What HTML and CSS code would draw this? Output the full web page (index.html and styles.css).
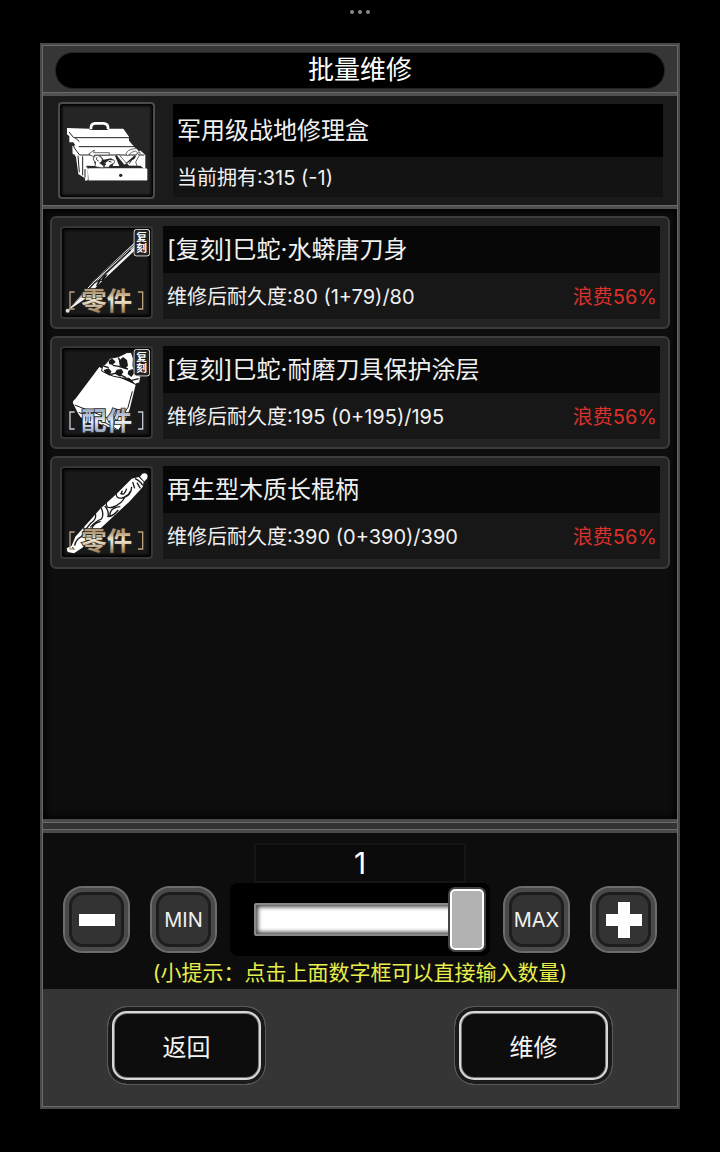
FILE: index.html
```html
<!DOCTYPE html>
<html lang="zh-CN">

<head>
    <meta charset="UTF-8">
    <meta name="viewport" content="width=device-width, initial-scale=1.0">
    <title>批量维修</title>
    <link rel="stylesheet" href="styles.css">
</head>

<body>
    <!-- 公用的渐变和角标 -->
    <svg class="defs" aria-hidden="true">
        <defs>
            <linearGradient id="gold" x1="0" y1="0" x2="0" y2="1">
                <stop offset="0.25" stop-color="#b39a74" />
                <stop offset="0.5" stop-color="#f6ead2" />
                <stop offset="0.9" stop-color="#9a7c52" />
            </linearGradient>
            <linearGradient id="silver" x1="0" y1="0" x2="0" y2="1">
                <stop offset="0.25" stop-color="#a5b2c9" />
                <stop offset="0.55" stop-color="#e9eef6" />
                <stop offset="0.9" stop-color="#8fa0ba" />
            </linearGradient>
            <symbol id="reissue" viewBox="0 0 51 84">
                <rect x="2" y="2" width="47" height="80" rx="8" fill="#222" stroke="#e6e6e6" stroke-width="3" />
                <text class="badge-text" x="25" y="38">复</text>
                <text class="badge-text" x="25" y="71">刻</text>
            </symbol>
        </defs>
    </svg>

    <header class="status">
        <span class="dot"></span>
        <span class="dot"></span>
        <span class="dot"></span>
    </header>

    <main class="panel">
        <div class="title-bar">
            <h1 class="title">批量维修</h1>
        </div>

        <!-- 当前使用的修理盒 -->
        <section class="tool">
            <div class="tool-icon">
                <svg viewBox="30 27 279 279" aria-hidden="true">
                    <path d="M123 103v-8q2-9 12-10h26q11 1 13 10v8" fill="none" stroke="#fff" stroke-width="8" />
                    <path d="M51 99l66 2 4 4h52l3-4h44l17 24v12l19 22-1 9 17-1 14 13v40l6 2v34H112l-7 1v-7l-20-13-7-50-5-9h-5l-1-25 9-2-6-9H58v-18l-7-6z" fill="#fff" />
                    <path d="M57 111l14 17h166M75 128l13 12M86 155h168M68 144l5 15 16 21h194M84 182l4 50M98 184v57M109 215l6 6v35M105 222v26" fill="none" stroke="#222" stroke-width="3" />
                    <path d="M108 212l28 1-7-25q8-10 23-5l9 11 22-4 10 7-5 16h20l-13-30 7-4 26 25 26-23 6 7-16 24h27l10 8H116z" fill="#242424" />
                    <path d="M116 177l17-12-2 8h47v7h-45l-1 6zM228 177q5-14 22-15 8-4 12 0l9 13-8-2-7-5-11 4-12 10z" fill="#fff" stroke="#222" stroke-width="2" />
                    <path d="M130 190q2-9 12-9 11 2 15 12-1 10-8 11l14 10-3 5-25-4 2-14q-7-3-7-11zM166 203l11-9 15 1 2 8-13 7-5 7-16-1 8-9-8-3zM199 181l8-2 30 34h24l-4-12 11-20-7-6-8 16-12 6-18 13z" fill="#fff" stroke="#222" stroke-width="2" />
                    <path d="M141 187q-4 9 5 11M176 199l8 2M238 206l8-13" fill="none" stroke="#222" stroke-width="3" />
                    <path d="M113 221h178v35H116z" fill="#fff" />
                    <path d="M115 220h176" stroke="#aaa" stroke-width="1" />
                    <circle cx="212" cy="241" r="5" fill="#222" />
                </svg>
            </div>
            <div class="info tool-info">
                <h2 class="name">军用级战地修理盒</h2>
                <p class="detail">当前拥有:315 (-1)</p>
            </div>
        </section>

        <ul class="list">
            <li class="item">
                <div class="item-icon">
                    <svg viewBox="36 39 267 267" aria-hidden="true">
                        <path d="M52 288L129 199 253 83l5 20-110 103-43 46z" fill="#f2f2f2" />
                        <path d="M60 272l74-77L254 88" fill="none" stroke="#1b1b1b" stroke-width="3" />
                        <path d="M66 272l75-77L255 93" fill="none" stroke="#1b1b1b" stroke-width="2" />
                        <path d="M104 236l30-33 14-8 24-24 70-66" fill="none" stroke="#1b1b1b" stroke-width="4" />
                        <path d="M138 212l10-20 6 3 8-14 11-3-14 21-7-2-9 16z" fill="#151515" />
                        <circle cx="53" cy="287" r="6" fill="#ddd" />
                        <use href="#reissue" x="250" y="41" width="51" height="84" />
                        <path class="bracket-gold" d="M74 231H60v51h14M264 231h14v51h-14" />
                        <text class="tag tag-gold" x="170" y="284">零件</text>
                    </svg>
                </div>
                <div class="info">
                    <h2 class="name">[复刻]巳蛇·水蟒唐刀身</h2>
                    <p class="detail">
                        <span>维修后耐久度:80 (1+79)/80</span>
                        <span class="waste">浪费56%</span>
                    </p>
                </div>
            </li>
            <li class="item">
                <div class="item-icon">
                    <svg viewBox="36 39 267 267" aria-hidden="true">
                        <path d="M148 96l49 26 60 27-18 74-10 25-25 38-112-39-8-12-15-30q-2-8 7-13z" fill="#fff" />
                        <path d="M74 210l100 39 55-7M86 232l83 33 35 20M247 169l-13 48-12 18" fill="none" stroke="#1b1b1b" stroke-width="3" />
                        <path d="M158 92l9-5 13-17 26-5 24-12 14-1 6 18-1 23 8 26 15 5-3 19-14 5-17-18-20-1-27-5-24-10-12-6z" fill="#fff" stroke="#1b1b1b" stroke-width="3" />
                        <path d="M176 78l10-8 11 10-9 10-11-3zM207 77l12-11 12 9 3 17-9 9-16-8zM194 116l6-12 14-2 6 9-9 14zM161 105l15-5 8 9-5 13-14-9zM235 107l13-5 8 8-12 16-11-9z" fill="#1b1b1b" />
                        <path d="M205 68l6 12 20-2M188 91l18 3 28 8M179 119l21-5 28 14M242 137l24-6M160 93l16 5" fill="none" stroke="#1b1b1b" stroke-width="4" />
                        <use href="#reissue" x="250" y="41" width="51" height="84" />
                        <path class="bracket-silver" d="M74 231H60v51h14M264 231h14v51h-14" />
                        <text class="tag tag-silver" x="170" y="284">配件</text>
                    </svg>
                </div>
                <div class="info">
                    <h2 class="name">[复刻]巳蛇·耐磨刀具保护涂层</h2>
                    <p class="detail">
                        <span>维修后耐久度:195 (0+195)/195</span>
                        <span class="waste">浪费56%</span>
                    </p>
                </div>
            </li>
            <li class="item">
                <div class="item-icon">
                    <svg viewBox="36 39 267 267" aria-hidden="true">
                        <path d="M245 71l22-5 14 14-3 16-40 44-94 87-47 51-25 17-19-4-3-11 15-8 11-27 75-84 49-45z" fill="#fff" />
                        <path d="M270 65l7-9q8-4 14 2 5 7 0 13l-9 9z" fill="#fff" />
                        <path d="M255 71q16 7 23 20M199 115q-2 17 17 14 29-7 29-34M211 115q12 9 19-14M218 107q-6 5-1 9M169 141q-3 22 20 15 27-10 36-31 12-5 17-18M154 159q9 21 0 33-19 8-33 25M164 153q14 14 10 32 14 0 31-20M180 185q-4-27 31-30M136 177q5 14-14 28l-22 27M125 223q4-18 27-24M98 215q12 10-4 30-17 9-20 27M261 83l10 17M248 81l6 19M67 277l5 7" fill="none" stroke="#1b1b1b" stroke-width="4" />
                        <path d="M267 65l15 15" stroke="#1b1b1b" stroke-width="3" />
                        <path class="bracket-gold" d="M74 231H60v51h14M264 231h14v51h-14" />
                        <text class="tag tag-gold" x="170" y="284">零件</text>
                    </svg>
                </div>
                <div class="info">
                    <h2 class="name">再生型木质长棍柄</h2>
                    <p class="detail">
                        <span>维修后耐久度:390 (0+390)/390</span>
                        <span class="waste">浪费56%</span>
                    </p>
                </div>
            </li>
        </ul>

        <div class="divider"></div>

        <!-- 数量选择 -->
        <section class="amount">
            <input class="number" type="text" inputmode="numeric" value="1" aria-label="数量">
            <div class="controls">
                <div class="btn-group">
                    <button class="btn-square" type="button" aria-label="减少">
                        <svg width="36" height="36" viewBox="0 0 36 36" aria-hidden="true"><path d="M0 12h36v12H0z" fill="#fff" /></svg>
                    </button>
                    <button class="btn-square" type="button">MIN</button>
                </div>
                <div class="slider-box">
                    <input class="slider" type="range" min="0" max="1" value="1" aria-label="数量滑块">
                </div>
                <div class="btn-group">
                    <button class="btn-square" type="button">MAX</button>
                    <button class="btn-square" type="button" aria-label="增加">
                        <svg width="36" height="36" viewBox="0 0 36 36" aria-hidden="true"><path d="M12 0h12v12h12v12H24v12H12V24H0V12h12z" fill="#fff" /></svg>
                    </button>
                </div>
            </div>
            <p class="hint">(小提示：点击上面数字框可以直接输入数量)</p>
        </section>

        <footer class="actions">
            <button class="btn-main" type="button">返回</button>
            <button class="btn-main" type="button">维修</button>
        </footer>
    </main>
</body>

</html>
```

FILE: styles.css
```css
* {
    margin: 0;
    padding: 0;
    box-sizing: border-box;
}

body {
    display: flex;
    flex-direction: column;
    min-height: 100vh;
    padding: 0 40px 43px;
    background-color: #000;
    color: #f0f0f0;
    font-family: Inter, "Noto Sans CJK SC", sans-serif;
}

button,
input {
    font-family: inherit;
    color: inherit;
}

.defs {
    position: absolute;
    width: 0;
    height: 0;
}

/* 顶部的三个点 */
.status {
    display: flex;
    justify-content: center;
    gap: 4px;
    height: 43px;
    padding-top: 10px;
}

.dot {
    width: 4px;
    height: 4px;
    border-radius: 50%;
    background-color: #8a8a8a;
}

/* 主面板 */
.panel {
    flex: 1;
    display: flex;
    flex-direction: column;
    border: 2px solid #484848;
    outline: 1px solid #6a6a6a;
    outline-offset: -3px;
    padding: 1px;
    background-color: #0d0d0d;
}

.title-bar {
    padding: 6px 12px 4px;
    background-color: #363636;
    border-bottom: 3px solid #505050;
    box-shadow: inset 0 -1px #6a6a6a;
}

.title {
    height: 37px;
    border: 1px solid #242424;
    border-radius: 18px;
    background-color: #000;
    color: #fff;
    font-size: 26px;
    font-weight: 400;
    line-height: 34px;
    text-align: center;
}

/* 修理盒 */
.tool {
    display: flex;
    align-items: center;
    gap: 18px;
    padding: 6px 14px 7px 15px;
    background-color: #1b1b1b;
    border-bottom: 3px solid #505050;
    box-shadow: inset 0 -1px #6a6a6a;
}

.tool-icon {
    flex: none;
    width: 97px;
    height: 97px;
    border: 2px solid #4c4c4c;
    border-radius: 4px;
    background-color: #252525;
    box-shadow: inset 0 0 3px 2px #000;
}

.tool-icon svg,
.item-icon svg {
    display: block;
    width: 100%;
    height: 100%;
}

.info {
    flex: 1;
    display: grid;
    grid-template-rows: 47px 46px;
    background-color: #171717;
}

.tool-info {
    grid-template-rows: 53px 40px;
    background-color: #131313;
}

.name {
    display: flex;
    align-items: center;
    padding-left: 4px;
    background-color: #070707;
    font-size: 24px;
    font-weight: 400;
    line-height: 36px;
}

.tool-info .name {
    background-color: #000;
}

.detail {
    display: flex;
    align-items: center;
    justify-content: space-between;
    padding: 2px 3px 0 4px;
    font-size: 20px;
    line-height: 30px;
}

.waste {
    color: #d9302a;
}

/* 物品列表 */
.list {
    flex: 1;
    display: flex;
    flex-direction: column;
    gap: 7px;
    padding: 7px;
    list-style: none;
    box-shadow: inset 0 0 6px 2px #000;
}

.item {
    display: flex;
    gap: 10px;
    padding: 8px;
    border: 2px solid #3c3c3c;
    border-radius: 6px;
    background-color: #242424;
}

.item-icon {
    flex: none;
    width: 93px;
    height: 93px;
    border: 2px solid #363636;
    border-radius: 4px;
    background-color: #191919;
    box-shadow: inset 0 0 3px 2px #000;
}

.badge-text {
    fill: #fff;
    font-size: 32px;
    font-weight: 700;
    text-anchor: middle;
}

.tag {
    font-size: 76px;
    font-weight: 700;
    text-anchor: middle;
    stroke: #2a2622;
    stroke-width: 5px;
    paint-order: stroke;
}

.tag-gold {
    fill: url(#gold);
}

.tag-silver {
    fill: url(#silver);
}

.bracket-gold,
.bracket-silver {
    fill: none;
    stroke: #b9a27d;
    stroke-width: 4px;
}

.bracket-silver {
    stroke: #c3cad6;
}

.divider {
    height: 14px;
    border: solid #4a4a4a;
    border-width: 3px 0;
    background-color: #333;
    box-shadow: inset 0 1px #6a6a6a, inset 0 -1px #6a6a6a;
}

/* 数量选择 */
.amount {
    display: flex;
    flex-direction: column;
    align-items: center;
    padding-top: 10px;
}

.number {
    width: 212px;
    height: 40px;
    border: 2px solid #151515;
    background-color: #0b0b0b;
    color: #fff;
    font-size: 30px;
    text-align: center;
}

.controls {
    align-self: stretch;
    display: flex;
    align-items: center;
    justify-content: space-between;
    gap: 13px;
    padding: 0 20px;
}

.btn-group {
    display: flex;
    gap: 20px;
}

.btn-square {
    display: flex;
    align-items: center;
    justify-content: center;
    width: 67px;
    height: 67px;
    border: 2px solid #6c6c6c;
    border-radius: 20px;
    background-color: #333;
    box-shadow: inset 0 0 0 4px #4a4a4a, inset 0 0 0 7px #1d1d1d;
    color: #f0f0f0;
    font-size: 20px;
}

.slider-box {
    flex: 1;
    height: 73px;
    padding: 0 4px 0 24px;
    border-radius: 8px;
    background-color: #000;
}

.slider {
    display: block;
    width: 100%;
    height: 73px;
    appearance: none;
    background: none;
}

.slider::-webkit-slider-runnable-track {
    height: 33px;
    border-radius: 3px;
    background-color: #fff;
    box-shadow: inset 0 0 0 2px #8a8a8a, inset 0 0 4px 4px #444;
}

.slider::-webkit-slider-thumb {
    appearance: none;
    width: 38px;
    height: 65px;
    margin-top: -16px;
    border: 2px solid #444;
    border-radius: 7px;
    background-color: #b2b2b2;
    box-shadow: inset 0 0 0 2px #fff;
}

.hint {
    color: #e8ee4a;
    font-size: 21px;
    line-height: 33px;
}

.actions {
    display: flex;
    justify-content: space-between;
    padding: 17px 64px 21px;
    background-color: #353535;
}

.btn-main {
    width: 159px;
    height: 79px;
    border: 1px solid #5a5a5a;
    border-radius: 20px;
    background-color: #0d0d0d;
    box-shadow: inset 0 0 0 4px #1b1b1b, inset 0 0 0 6px #d8d8d8, inset 0 0 0 7px #777;
    color: #f5f5f5;
    font-size: 24px;
}
```
